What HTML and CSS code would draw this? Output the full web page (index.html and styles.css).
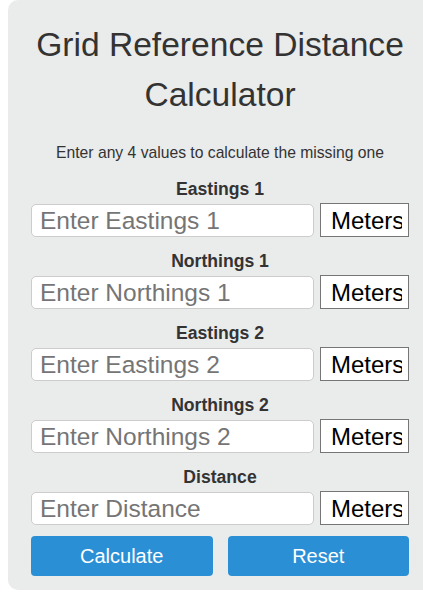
FILE: index.html
```html
<!DOCTYPE html>
<html lang="en">
<head>
  <meta charset="UTF-8">
  <meta name="viewport" content="width=device-width, initial-scale=1.0">
  <title>Grid Reference Distance Calculator</title>
  <link rel="stylesheet" href="styles.css">
</head>
<body>

  <div class="calculator">
    <h1 class="title">Grid Reference Distance Calculator</h1>
    <p class="intro">Enter any 4 values to calculate the missing one</p>

    <div class="field">
      <label for="e1">Eastings 1</label>
      <div class="row">
        <input type="text" id="e1" placeholder="Enter Eastings 1">
        <select><option>Meters</option><option>Kilometers</option></select>
      </div>
    </div>

    <div class="field">
      <label for="n1">Northings 1</label>
      <div class="row">
        <input type="text" id="n1" placeholder="Enter Northings 1">
        <select><option>Meters</option><option>Kilometers</option></select>
      </div>
    </div>

    <div class="field">
      <label for="e2">Eastings 2</label>
      <div class="row">
        <input type="text" id="e2" placeholder="Enter Eastings 2">
        <select><option>Meters</option><option>Kilometers</option></select>
      </div>
    </div>

    <div class="field">
      <label for="n2">Northings 2</label>
      <div class="row">
        <input type="text" id="n2" placeholder="Enter Northings 2">
        <select><option>Meters</option><option>Kilometers</option></select>
      </div>
    </div>

    <div class="field">
      <label for="dist">Distance</label>
      <div class="row">
        <input type="text" id="dist" placeholder="Enter Distance">
        <select><option>Meters</option><option>Kilometers</option></select>
      </div>
    </div>

    <div class="actions">
      <button>Calculate</button>
      <button>Reset</button>
    </div>
  </div>

</body>
</html>
```

FILE: styles.css
```css
* { box-sizing: border-box; }
html, body { overflow: hidden; }
body {
  margin: 0 0 0 8px;
  background: #fff;
  color: #333;
  font-family: "Liberation Sans", Arial, sans-serif;
}
.calculator {
  width: 424px;
  height: 590px;
  background: #eaebeb;
  border-radius: 10px;
  padding: 20px 23px 14px;
}
.title {
  font-size: 33.6px; font-weight: normal; line-height: 50px;
  text-align: center; margin: 0;
}
.intro {
  font-size: 15.7px; line-height: 20px; text-align: center;
  margin: 23px 0 17px;
}
.field + .field { margin-top: 15px; }
.field label {
  display: block; text-align: center;
  font-size: 17.6px; font-weight: bold; line-height: 19px;
  margin-bottom: 5px;
}
.row { display: flex; gap: 6px; }
.row input {
  flex: 1; min-width: 0; height: 33px;
  font: 24.5px "Liberation Sans", Arial, sans-serif;
  padding: 0 8px;
  border: 1px solid #ccc; border-radius: 5px;
  background: #fff;
}
.row input::placeholder { color: #757575; }
.row select {
  width: 89px; height: 34px; margin-top: -1px;
  font: 24px "Liberation Sans", Arial, sans-serif;
  color: #000;
  padding: 0 6px 0 10px;
  border: 1px solid #767676; border-radius: 0;
  background: #fff;
  appearance: none; -webkit-appearance: none;
}
.actions { display: flex; gap: 15px; margin-top: 11px; }
.actions button {
  flex: 1; height: 40px;
  background: #2b8fd6; color: #fff;
  border: none; border-radius: 4px;
  font: 20px "Liberation Sans", Arial, sans-serif;
  cursor: pointer;
}
```
